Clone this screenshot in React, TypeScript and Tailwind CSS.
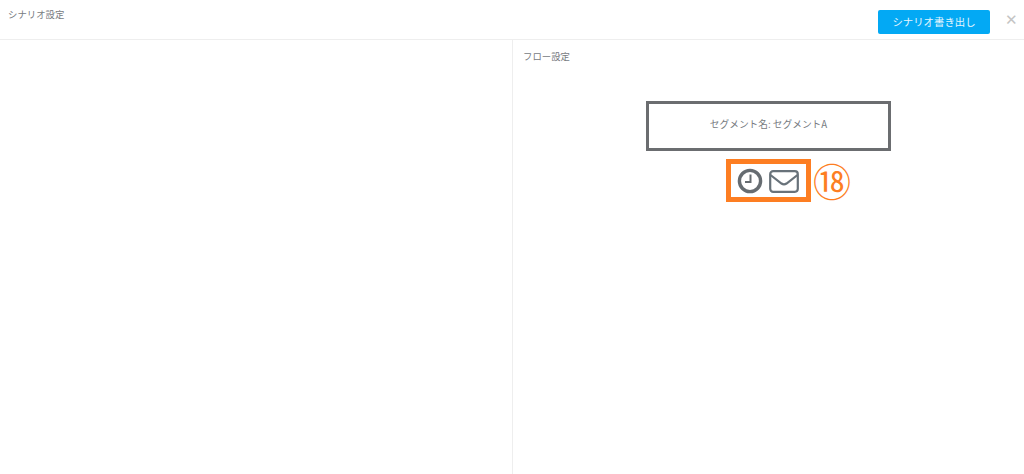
import React from 'react'

const font = { fontFamily: '"Noto Sans CJK JP", "Noto Sans", sans-serif' }

function ClockIcon() {
  return (
    <svg width="26" height="26" viewBox="0 0 26 26" fill="none" stroke="#666c71">
      <circle cx="13" cy="13" r="10.6" strokeWidth="3.4" />
      <path d="M13.5 6.5V14H8" strokeWidth="2" />
    </svg>
  )
}

function MailIcon() {
  return (
    <svg width="30" height="23" viewBox="0 0 30 23" fill="none" stroke="#68727a" strokeWidth="2.2">
      <rect x="1.2" y="1.2" width="27.6" height="20.6" rx="3" />
      <path d="M1.5 5 L12.5 13.5 Q15 15.3 17.5 13.5 L28.5 5" />
    </svg>
  )
}

function FlowStep() {
  return (
    <div className="relative mt-2">
      <div className="flex h-[43px] w-[85px] items-center gap-[6px] border-[5px] border-[#fd7e22] pl-[6px] pt-[1px]">
        <ClockIcon />
        <MailIcon />
      </div>
      <span className="absolute left-[87px] top-[-6px] text-[38px] font-normal leading-[54px] text-[#fd7e22]">⑱</span>
    </div>
  )
}

export default function App() {
  return (
    <div className="flex h-[474px] w-[1024px] flex-col overflow-hidden bg-white text-[#777b7f]" style={font}>
      <header className="flex h-10 shrink-0 items-start justify-between border-b border-[#eeeeee] pl-2 pr-[6px]">
        <h1 className="mt-[7px] text-[9.4px] font-normal leading-[15px]">シナリオ設定</h1>
        <div className="mt-[10px] flex items-start">
          <button className="h-6 w-[112px] rounded-[2px] bg-[#03a9f4] text-[10.4px] text-[#e6f6fe]">シナリオ書き出し</button>
          <span className="ml-[15px] mt-[1px] text-[15px] leading-[15px] text-[#c4c4c4]">✕</span>
        </div>
      </header>
      <main className="flex min-h-0 flex-1">
        <section className="w-[512px] border-r border-[#eeeeee] box-content" />
        <section className="flex flex-1 flex-col">
          <h2 className="ml-[10px] mt-[9px] text-[9.4px] font-normal leading-[15px]">フロー設定</h2>
          <div className="mt-[37px] flex flex-col items-center">
            <div className="flex h-[50px] w-[245px] items-center justify-center border-[3px] border-[#6b6d70] pb-[4px] text-[9.7px]">
              セグメント名: セグメントA
            </div>
            <FlowStep />
          </div>
        </section>
      </main>
    </div>
  )
}
